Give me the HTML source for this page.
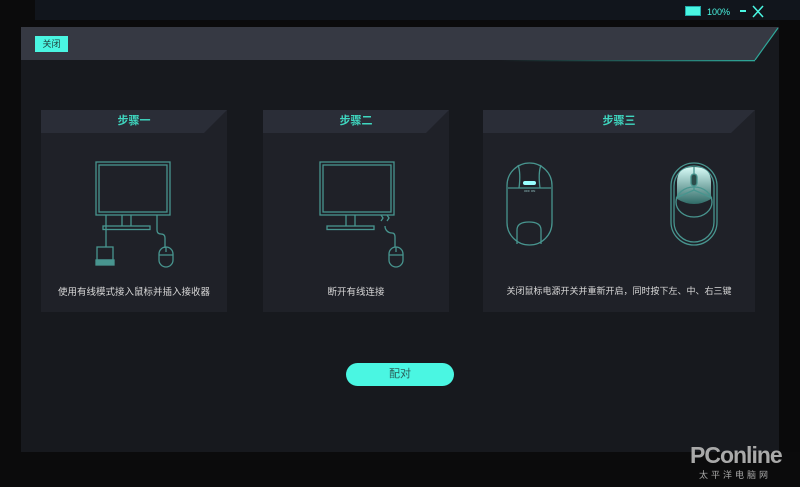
<!DOCTYPE html>
<html><head><meta charset="utf-8"><style>
*{margin:0;padding:0;box-sizing:border-box}
body{width:800px;height:487px;background:#0b0b0c;position:relative;overflow:hidden;font-family:"Liberation Sans","Noto Sans CJK SC",sans-serif}
.top{position:absolute;left:35px;top:0;width:765px;height:20px;background:#11151c}
.dlg{position:absolute;left:21px;top:27px;width:758px;height:425px;background:#17191e}
.card{position:absolute;top:110px;height:202px;background:#1f2128}
.ct{position:absolute;left:0;top:0;width:100%;height:23px;text-align:center;color:#3fd7c0;font-size:11px;line-height:23px;font-weight:bold}
.txt{position:absolute;left:0;width:100%;top:174px;text-align:center;color:#d8d8d8;font-size:9.5px}
</style></head><body>
<div class="top"></div>
<svg style="position:absolute;left:685px;top:5px" width="100" height="14">
<rect x="0.5" y="1.5" width="15" height="9" fill="#4af6e2" stroke="#2aa" /><text x="22" y="10" fill="#4af6e2" font-size="9" font-family="Liberation Sans">100%</text>
<line x1="55" y1="6" x2="61" y2="6" stroke="#4af6e2" stroke-width="2"/><path d="M68 1L78 12M78 1L68 12" stroke="#4af6e2" stroke-width="1.5"/></svg>
<div class="dlg"></div>
<svg style="position:absolute;left:21px;top:27px" width="758" height="36">
<defs><linearGradient id="hl" gradientUnits="userSpaceOnUse" x1="480" y1="0" x2="734" y2="0"><stop offset="0" stop-color="#2fa89a" stop-opacity="0"/><stop offset="1" stop-color="#2fa89a"/></linearGradient></defs>
<polygon points="0,0 758,0 734,33 0,33" fill="#363943"/>
<rect x="480" y="33" width="254" height="1.3" fill="url(#hl)"/>
<line x1="734" y1="33" x2="757" y2="1" stroke="#2fa89a" stroke-width="1.2"/>
</svg>
<div style="position:absolute;left:35px;top:36px;width:33px;height:16px;background:#4af6e2;color:#1e3d3a;font-size:9px;line-height:16px;text-align:center">关闭</div>

<div class="card" style="left:41px;width:186px"><svg width="186" height="23" style="position:absolute"><polygon points="0,0 186,0 163,23 0,23" fill="#2a2d37"/></svg><div class="ct">步骤一</div>
<svg width="186" height="202" style="position:absolute;left:0;top:0" fill="none" stroke="#48958f" stroke-width="1.3">
<rect x="55" y="52" width="74" height="53"/><rect x="58" y="55" width="68" height="47"/>
<path d="M81 105v11M90 105v11"/><rect x="62" y="116" width="47" height="3.5"/>
<path d="M65 105v32M116 105v15q0 4 4 4q4 0 4 4v10"/>
<rect x="56" y="137" width="16" height="13"/><rect x="55" y="150" width="18" height="5" fill="#48958f"/>
<rect x="118" y="137" width="14" height="20" rx="7"/><path d="M118 145h14M125 137v5"/>
</svg><div class="txt">使用有线模式接入鼠标并插入接收器</div></div>

<div class="card" style="left:263px;width:186px"><svg width="186" height="23" style="position:absolute"><polygon points="0,0 186,0 163,23 0,23" fill="#2a2d37"/></svg><div class="ct">步骤二</div>
<svg width="186" height="202" style="position:absolute;left:0;top:0" fill="none" stroke="#48958f" stroke-width="1.3">
<rect x="57" y="52" width="74" height="53"/><rect x="60" y="55" width="68" height="47"/>
<path d="M83 105v11M92 105v11"/><rect x="64" y="116" width="47" height="3.5"/>
<path d="M122 116q0 3 2 5q2 2 5 2q3 0 3 4v10M118 105l2 3-2 3M124 105l2 3-2 3" />
<rect x="126" y="137" width="14" height="20" rx="7"/><path d="M126 145h14M133 137v5"/>
</svg><div class="txt">断开有线连接</div></div>

<div class="card" style="left:483px;width:272px"><svg width="272" height="23" style="position:absolute"><polygon points="0,0 272,0 248,23 0,23" fill="#2a2d37"/></svg><div class="ct">步骤三</div>
<svg width="272" height="202" style="position:absolute;left:0;top:0" fill="none" stroke="#48958f" stroke-width="1.3">
<defs><linearGradient id="g" x1="0" y1="0" x2="0" y2="1"><stop offset="0" stop-color="#d8fbf7"/><stop offset="1" stop-color="#2f6a66"/></linearGradient></defs>
<rect x="24" y="53" width="45" height="82" rx="22.5"/><path d="M25 78h43M34 134v-14q0-8 12-8q12 0 12 8v14M35 55q3 8 1 23M58 55q-3 8-1 23"/>
<rect x="40" y="71" width="13" height="4" rx="2" fill="#9ff" stroke="none"/>
<text x="41" y="82" font-size="3" fill="#9cc" stroke="none">OFF ON</text>
<rect x="188" y="53" width="46" height="82" rx="23"/>
<rect x="191" y="56" width="40" height="76" rx="20"/>
<path d="M194 72q0-15 17-15q17 0 17 15v17q-17 10-34 0z" fill="url(#g)" stroke="none"/>
<ellipse cx="211" cy="92" rx="18" ry="15"/>
<path d="M211 57v23M193 88l18-8 18 8"/><rect x="208" y="64" width="6" height="12" rx="3" fill="#2c4d4b"/>
</svg><div class="txt" style="font-size:9px">关闭鼠标电源开关并重新开启，同时按下左、中、右三键</div></div>

<div style="position:absolute;left:346px;top:363px;width:108px;height:23px;border-radius:12px;background:#4af6e2;color:#2b5f5a;font-size:11px;line-height:23px;text-align:center">配对</div>
<div style="position:absolute;left:779px;top:20px;width:21px;height:432px;background:#0a0a0b"></div>
<div style="position:absolute;left:690px;top:442px;color:#a9a9a9;font-size:23px;font-weight:bold;letter-spacing:-1px">PConline</div>
<div style="position:absolute;left:699px;top:468px;color:#a9a9a9;font-size:9px;letter-spacing:3px">太平洋电脑网</div>
</body></html>
